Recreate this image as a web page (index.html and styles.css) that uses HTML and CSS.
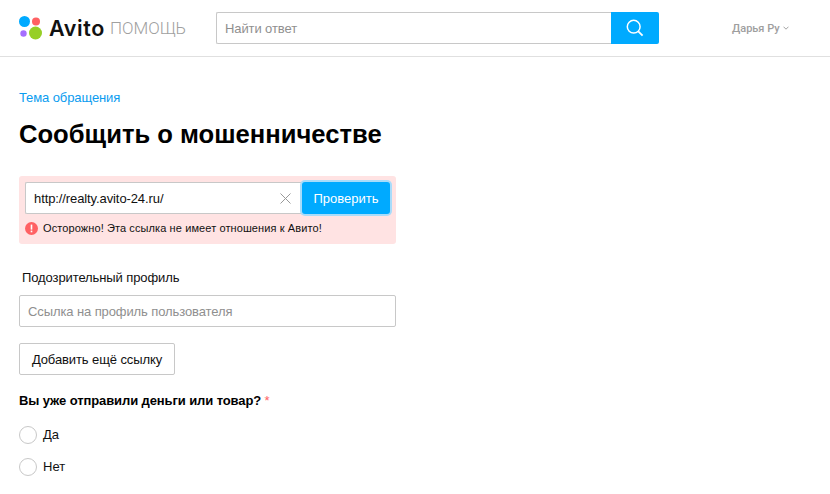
FILE: index.html
```html
<!DOCTYPE html>
<html lang="ru">
<head>
  <meta charset="UTF-8">
  <title>Авито Помощь</title>
  <link rel="stylesheet" href="styles.css">
</head>
<body>
  <header class="top-bar">
    <div class="logo">
      <svg class="logo-mark" width="24" height="24" viewBox="0 0 24 24">
        <circle cx="5.5" cy="5.5" r="5.5" fill="#00aaff"/>
        <circle cx="17" cy="5.5" r="4" fill="#ff6163"/>
        <circle cx="4.5" cy="17.5" r="3.2" fill="#a56eff"/>
        <circle cx="16.5" cy="17" r="6.5" fill="#97cf26"/>
      </svg>
      <span class="logo-name">Avito</span>
      <span class="logo-help">ПОМОЩЬ</span>
    </div>
    <div class="search">
      <input class="search-input" type="text" placeholder="Найти ответ">
      <button class="search-button" type="button" aria-label="Найти">
        <svg width="18" height="18" viewBox="0 0 18 18" fill="none" stroke="#fff">
          <circle cx="7.7" cy="7.7" r="6.4" stroke-width="1.5"/>
          <path d="M12.3 12.3 L16.6 16.6" stroke-width="1.8"/>
        </svg>
      </button>
    </div>
    <div class="user">
      Дарья Ру
      <svg width="6" height="4" viewBox="0 0 6 4" fill="none" stroke="#a3a3a3"><path d="M.5.7 3 3.2 5.5.7"/></svg>
    </div>
  </header>

  <main class="content">
    <a class="topic-link" href="#">Тема обращения</a>
    <h1 class="title">Сообщить о мошенничестве</h1>

    <div class="check-box">
      <div class="check-row">
        <div class="check-field">
          <span class="check-value">http://realty.avito-24.ru/</span>
          <svg width="11" height="11" viewBox="0 0 11 11" stroke="#999"><path d="M.5.5 10.5 10.5M10.5.5.5 10.5"/></svg>
        </div>
        <button class="check-button" type="button">Проверить</button>
      </div>
      <div class="warning">
        <svg width="13" height="13" viewBox="0 0 13 13">
          <circle cx="6.5" cy="6.5" r="6.5" fill="#ff6163"/>
          <rect x="5.7" y="2.6" width="1.6" height="5" fill="#fff"/>
          <rect x="5.7" y="8.6" width="1.6" height="1.7" fill="#fff"/>
        </svg>
        <span>Осторожно! Эта ссылка не имеет отношения к Авито!</span>
      </div>
    </div>

    <label class="field-label">Подозрительный профиль</label>
    <input class="field-input" type="text" placeholder="Ссылка на профиль пользователя">
    <button class="add-button" type="button">Добавить ещё ссылку</button>

    <p class="question">Вы уже отправили деньги или товар? <span class="required">*</span></p>
    <div class="radio-row"><span class="radio"></span>Да</div>
    <div class="radio-row"><span class="radio"></span>Нет</div>
  </main>
</body>
</html>
```

FILE: styles.css
```css
html, body {
  height: 100%;
  overflow: hidden;
}

body {
  margin: 0;
  font-family: "Liberation Sans", Arial, sans-serif;
  font-size: 13px;
  color: #000;
  background-color: #fff;
}

.top-bar {
  display: flex;
  align-items: center;
  height: 56px;
  border-bottom: 1px solid #e0e0e0;
}

.logo {
  display: flex;
  align-items: center;
  width: 197px;
  margin-left: 19px;
  flex-shrink: 0;
}

.logo-mark {
  margin-right: 6px;
}

.logo-name {
  font-family: Inter, "Liberation Sans", sans-serif;
  font-weight: 600;
  font-size: 21.5px;
  letter-spacing: 0.6px;
  color: #111;
}

.logo-help {
  margin-left: 5px;
  font-family: Roboto, "Liberation Sans", sans-serif;
  font-weight: 300;
  font-size: 17px;
  color: #a0a0a0;
}

.search {
  display: flex;
  width: 443px;
  height: 32px;
}

.search-input {
  flex: 1;
  min-width: 0;
  box-sizing: border-box;
  padding: 0 8px;
  border: 1px solid #c8c8c8;
  border-right: none;
  border-radius: 2px 0 0 2px;
  font-family: inherit;
  font-size: 13px;
  letter-spacing: -0.1px;
  outline: none;
}

.search-input::placeholder,
.field-input::placeholder {
  color: #8f8f8f;
  opacity: 1;
}

.search-button {
  display: flex;
  align-items: center;
  justify-content: center;
  width: 48px;
  padding: 0;
  border: none;
  border-radius: 0 2px 2px 0;
  background-color: #00aaff;
}

.user {
  display: flex;
  align-items: center;
  gap: 3px;
  margin-left: 73px;
  font-family: Roboto, "Liberation Sans", sans-serif;
  font-size: 11px;
  font-weight: 500;
  color: #9e9e9e;
}

.content {
  padding: 33px 0 0 19px;
}

.topic-link {
  display: block;
  font-size: 13px;
  letter-spacing: -0.1px;
  line-height: 16px;
  color: #0a9cf0;
  text-decoration: none;
}

.title {
  margin: 12px 0 26px;
  font-size: 25.6px;
  line-height: 32px;
  font-weight: 700;
}

.check-box {
  box-sizing: border-box;
  width: 377px;
  height: 68px;
  padding: 6px;
  border-radius: 3px;
  background-color: #ffe3e3;
}

.check-row {
  display: flex;
  height: 32px;
}

.check-field {
  display: flex;
  align-items: center;
  justify-content: space-between;
  box-sizing: border-box;
  width: 277px;
  padding: 0 11px 0 8px;
  border: 1px solid #c8c8c8;
  border-right: none;
  border-radius: 2px 0 0 2px;
  background-color: #fff;
}

.check-value {
  font-size: 13px;
  letter-spacing: -0.1px;
  color: #111;
}

.check-button {
  width: 88px;
  padding: 0;
  border: none;
  border-radius: 3px;
  background-color: #00aaff;
  box-shadow: 0 0 0 2px #a8dcfa;
  color: #fff;
  font-family: inherit;
  font-size: 13px;
}

.warning {
  display: flex;
  align-items: center;
  gap: 5px;
  margin-top: 8px;
  font-size: 11px;
  letter-spacing: 0.1px;
  line-height: 13px;
  color: #111;
}

.field-label {
  display: block;
  margin: 26px 0 9px 3px;
  letter-spacing: -0.1px;
  line-height: 16px;
  color: #111;
}

.field-input {
  display: block;
  box-sizing: border-box;
  width: 377px;
  height: 32px;
  padding: 0 8px;
  border: 1px solid #c8c8c8;
  border-radius: 2px;
  font-family: inherit;
  font-size: 13px;
  letter-spacing: -0.1px;
  outline: none;
}

.add-button {
  display: block;
  width: 156px;
  height: 32px;
  margin-top: 16px;
  padding: 0;
  border: 1px solid #c8c8c8;
  border-radius: 2px;
  background-color: #fff;
  color: #111;
  font-family: inherit;
  font-size: 13px;
  letter-spacing: -0.1px;
}

.question {
  margin: 18px 0 17px;
  letter-spacing: -0.1px;
  line-height: 16px;
  font-weight: 700;
}

.required {
  font-weight: 400;
  color: #ff6163;
}

.radio-row {
  display: flex;
  align-items: center;
  gap: 6px;
  height: 18px;
  margin-bottom: 14px;
  line-height: 18px;
  color: #111;
}

.radio {
  box-sizing: border-box;
  width: 18px;
  height: 18px;
  border: 1px solid #c8c8c8;
  border-radius: 50%;
  background-color: #fff;
}
```
